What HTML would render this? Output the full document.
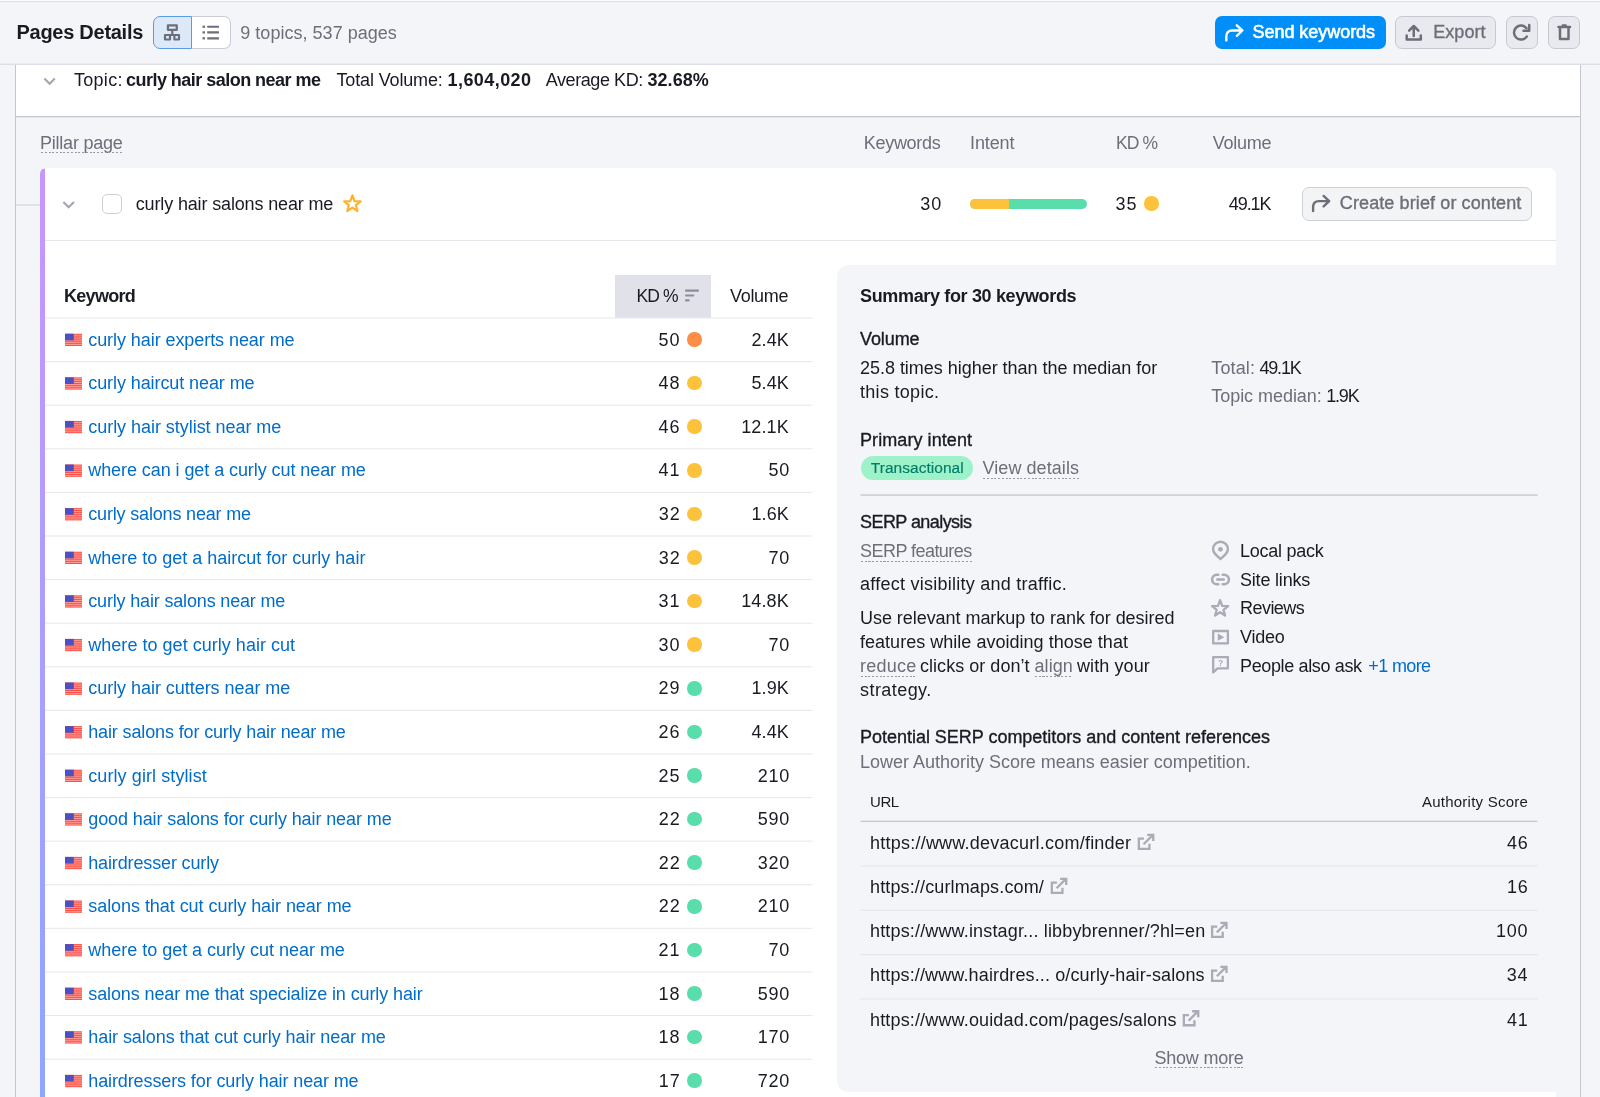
<!DOCTYPE html>
<html lang="en"><head><meta charset="utf-8"><title>Pages Details</title>
<style>
html,body{margin:0;padding:0}
body{width:1600px;height:1097px;overflow:hidden;position:relative;background:#f4f5f9;font-family:"Liberation Sans",sans-serif}
div,span.t,svg{position:absolute}
span.t{line-height:1;white-space:nowrap}
</style></head><body><div id="w" style="left:0;top:0;width:1600px;height:1097px;will-change:transform">
<div style="left:0px;top:0px;width:1600px;height:1px;background:#fbfbfb;"></div>
<div style="left:0px;top:1px;width:1600px;height:1px;background:#e2e2e3;"></div>
<div style="left:0px;top:2px;width:1600px;height:1px;background:#eeeff2;"></div>
<div style="left:0px;top:63px;width:1600px;height:1px;background:#eaebf0;"></div>
<div style="left:0px;top:64px;width:1600px;height:1px;background:#dddfe7;"></div>
<div style="left:15px;top:65px;width:1px;height:1032px;background:#c4c7cf;"></div>
<div style="left:1580px;top:65px;width:1px;height:1032px;background:#c4c7cf;"></div>
<div style="left:16px;top:65px;width:1564px;height:51px;background:#fff;"></div>
<div style="left:16px;top:116px;width:1564px;height:1px;background:#c4c7cf;"></div>
<div style="left:16px;top:117px;width:1564px;height:1px;background:#e9eaee;"></div>
<div style="left:16px;top:204px;width:24px;height:2px;background:#e1e2e7;"></div>
<div style="left:40px;top:168px;width:1516px;height:929px;background:#fff;border-radius:7px 7px 0 0"></div>
<div style="left:45px;top:240px;width:1511px;height:1px;background:#e6e7ec;"></div>
<div style="left:615px;top:274.5px;width:96px;height:43.5px;background:#e0e1e9;"></div>
<div style="left:837px;top:265px;width:719px;height:826.5px;background:#f4f5f9;border-radius:12px 0 0 12px"></div>
<div style="left:153px;top:15.5px;width:39px;height:33.5px;background:#dce9f9;border:1px solid #5a9be4;border-radius:7px 0 0 7px;box-sizing:border-box"></div>
<div style="left:192px;top:15.5px;width:38.6px;height:33.5px;background:#fff;border:1px solid #c9ccd4;border-left:none;border-radius:0 7px 7px 0;box-sizing:border-box"></div>
<div style="left:1215px;top:16px;width:171px;height:33px;background:#008ff8;border-radius:7px"></div>
<div style="left:1395px;top:16px;width:101px;height:33px;background:#e9eaef;border:1px solid #c6c9d1;border-radius:7px;box-sizing:border-box"></div>
<div style="left:1505.5px;top:16px;width:32.2px;height:33px;background:#e9eaef;border:1px solid #c6c9d1;border-radius:7px;box-sizing:border-box"></div>
<div style="left:1548px;top:16px;width:32px;height:33px;background:#e9eaef;border:1px solid #c6c9d1;border-radius:7px;box-sizing:border-box"></div>
<div style="left:1302px;top:186.5px;width:230px;height:34.5px;background:#f3f4f6;border:1px solid #cfd1d8;border-radius:7px;box-sizing:border-box"></div>
<div style="left:102.2px;top:194px;width:19.6px;height:19.5px;background:#fff;border:1px solid #cdd0d7;border-radius:5px;box-sizing:border-box"></div>
<div style="left:970px;top:198.75px;width:117px;height:10px;border-radius:5px;overflow:hidden;background:#59ddaa"><div style="left:0;top:0;width:39px;height:10px;background:#fdc23c"></div></div>
<div style="left:860.5px;top:456.25px;width:112.75px;height:23.75px;background:#9ef2c9;border-radius:12px"></div>
<div style="left:1144.0px;top:196.35px;width:14.5px;height:14.5px;background:#fdc23c;border-radius:50%"></div>
<div style="left:687.0px;top:332.25px;width:14.5px;height:14.5px;background:#ff8c43;border-radius:50%"></div>
<div style="left:687.0px;top:375.85px;width:14.5px;height:14.5px;background:#fdc23c;border-radius:50%"></div>
<div style="left:687.0px;top:419.44px;width:14.5px;height:14.5px;background:#fdc23c;border-radius:50%"></div>
<div style="left:687.0px;top:463.04px;width:14.5px;height:14.5px;background:#fdc23c;border-radius:50%"></div>
<div style="left:687.0px;top:506.64px;width:14.5px;height:14.5px;background:#fdc23c;border-radius:50%"></div>
<div style="left:687.0px;top:550.24px;width:14.5px;height:14.5px;background:#fdc23c;border-radius:50%"></div>
<div style="left:687.0px;top:593.83px;width:14.5px;height:14.5px;background:#fdc23c;border-radius:50%"></div>
<div style="left:687.0px;top:637.43px;width:14.5px;height:14.5px;background:#fdc23c;border-radius:50%"></div>
<div style="left:687.0px;top:681.03px;width:14.5px;height:14.5px;background:#59ddaa;border-radius:50%"></div>
<div style="left:687.0px;top:724.62px;width:14.5px;height:14.5px;background:#59ddaa;border-radius:50%"></div>
<div style="left:687.0px;top:768.22px;width:14.5px;height:14.5px;background:#59ddaa;border-radius:50%"></div>
<div style="left:687.0px;top:811.82px;width:14.5px;height:14.5px;background:#59ddaa;border-radius:50%"></div>
<div style="left:687.0px;top:855.41px;width:14.5px;height:14.5px;background:#59ddaa;border-radius:50%"></div>
<div style="left:687.0px;top:899.01px;width:14.5px;height:14.5px;background:#59ddaa;border-radius:50%"></div>
<div style="left:687.0px;top:942.61px;width:14.5px;height:14.5px;background:#59ddaa;border-radius:50%"></div>
<div style="left:687.0px;top:986.21px;width:14.5px;height:14.5px;background:#59ddaa;border-radius:50%"></div>
<div style="left:687.0px;top:1029.8px;width:14.5px;height:14.5px;background:#59ddaa;border-radius:50%"></div>
<div style="left:687.0px;top:1073.4px;width:14.5px;height:14.5px;background:#59ddaa;border-radius:50%"></div>
<span class="t" style="left:16.5px;top:22px;font-size:20px;color:#191b23;font-weight:700;letter-spacing:-0.271px;">Pages Details</span>
<span class="t" style="left:240.25px;top:24px;font-size:18px;color:#6c6e79;letter-spacing:0.028px;">9 topics, 537 pages</span>
<span class="t" style="left:1252.5px;top:23px;font-size:18px;color:#ffffff;letter-spacing:-0.042px;-webkit-text-stroke:0.6px #ffffff;">Send keywords</span>
<span class="t" style="left:1433.25px;top:23px;font-size:18px;color:#6c6e79;letter-spacing:0.05px;-webkit-text-stroke:0.35px #6c6e79;">Export</span>
<span class="t" style="left:73.95px;top:71px;font-size:18px;color:#191b23;letter-spacing:0.3px;">Topic:</span>
<span class="t" style="left:126.0px;top:71px;font-size:18px;color:#191b23;font-weight:700;letter-spacing:-0.526px;">curly hair salon near me</span>
<span class="t" style="left:336.5px;top:71px;font-size:18px;color:#191b23;letter-spacing:-0.146px;">Total Volume:</span>
<span class="t" style="left:447.5px;top:71px;font-size:18px;color:#191b23;font-weight:700;letter-spacing:0.438px;">1,604,020</span>
<span class="t" style="left:545.75px;top:71px;font-size:18px;color:#191b23;letter-spacing:-0.425px;">Average KD:</span>
<span class="t" style="left:647.5px;top:71px;font-size:18px;color:#191b23;font-weight:700;letter-spacing:0.05px;">32.68%</span>
<span class="t" style="left:40.0px;top:134px;font-size:18px;color:#6c6e79;letter-spacing:-0.225px;">Pillar page</span>
<div style="left:40.5px;top:152px;width:82.0px;height:1px;background:repeating-linear-gradient(90deg,#9799a4 0,#9799a4 2px,transparent 2px,transparent 3.75px)"></div>
<span class="t" style="left:863.75px;top:134px;font-size:18px;color:#6c6e79;letter-spacing:-0.286px;">Keywords</span>
<span class="t" style="left:970.0px;top:134px;font-size:18px;color:#6c6e79;letter-spacing:-0.1px;">Intent</span>
<span class="t" style="left:1116.0px;top:135px;font-size:17.5px;color:#6c6e79;letter-spacing:-0.85px;">KD %</span>
<span class="t" style="left:1212.75px;top:134px;font-size:18px;color:#6c6e79;letter-spacing:-0.25px;">Volume</span>
<span class="t" style="left:135.75px;top:195px;font-size:18px;color:#191b23;letter-spacing:-0.146px;">curly hair salons near me</span>
<span class="t" style="left:920.25px;top:195px;font-size:18px;color:#191b23;letter-spacing:1.0px;">30</span>
<span class="t" style="left:1115.5px;top:195px;font-size:18px;color:#191b23;letter-spacing:1.0px;">35</span>
<span class="t" style="left:1228.75px;top:195px;font-size:18px;color:#191b23;letter-spacing:-1.062px;">49.1K</span>
<span class="t" style="left:1339.8px;top:194px;font-size:18px;color:#6c6e79;letter-spacing:0.111px;-webkit-text-stroke:0.35px #6c6e79;">Create brief or content</span>
<span class="t" style="left:64.0px;top:287px;font-size:18px;color:#191b23;font-weight:700;letter-spacing:-0.708px;">Keyword</span>
<span class="t" style="left:636.5px;top:288px;font-size:17.5px;color:#191b23;letter-spacing:-0.85px;">KD %</span>
<span class="t" style="left:730.0px;top:287px;font-size:18px;color:#191b23;letter-spacing:-0.3px;">Volume</span>
<span class="t" style="left:88.25px;top:331px;font-size:18px;color:#006dca;letter-spacing:-0.07px;">curly hair experts near me</span>
<span class="t" style="left:658.45px;top:331px;font-size:18px;color:#191b23;letter-spacing:1.0px;">50</span>
<span class="t" style="left:751.5px;top:331px;font-size:18px;color:#191b23;letter-spacing:0.1px;">2.4K</span>
<span class="t" style="left:88.25px;top:374px;font-size:18px;color:#006dca;letter-spacing:-0.088px;">curly haircut near me</span>
<span class="t" style="left:658.45px;top:374px;font-size:18px;color:#191b23;letter-spacing:1.0px;">48</span>
<span class="t" style="left:751.5px;top:374px;font-size:18px;color:#191b23;letter-spacing:0.1px;">5.4K</span>
<span class="t" style="left:88.25px;top:418px;font-size:18px;color:#006dca;letter-spacing:-0.04px;">curly hair stylist near me</span>
<span class="t" style="left:658.45px;top:418px;font-size:18px;color:#191b23;letter-spacing:1.0px;">46</span>
<span class="t" style="left:741.25px;top:418px;font-size:18px;color:#191b23;letter-spacing:0.1px;">12.1K</span>
<span class="t" style="left:88.25px;top:461px;font-size:18px;color:#006dca;letter-spacing:-0.074px;">where can i get a curly cut near me</span>
<span class="t" style="left:658.45px;top:461px;font-size:18px;color:#191b23;letter-spacing:1.0px;">41</span>
<span class="t" style="left:768.5px;top:461px;font-size:18px;color:#191b23;letter-spacing:0.7px;">50</span>
<span class="t" style="left:88.25px;top:505px;font-size:18px;color:#006dca;letter-spacing:-0.171px;">curly salons near me</span>
<span class="t" style="left:658.7px;top:505px;font-size:18px;color:#191b23;letter-spacing:1.0px;">32</span>
<span class="t" style="left:751.5px;top:505px;font-size:18px;color:#191b23;letter-spacing:0.1px;">1.6K</span>
<span class="t" style="left:88.25px;top:549px;font-size:18px;color:#006dca;">where to get a haircut for curly hair</span>
<span class="t" style="left:658.7px;top:549px;font-size:18px;color:#191b23;letter-spacing:1.0px;">32</span>
<span class="t" style="left:768.5px;top:549px;font-size:18px;color:#191b23;letter-spacing:0.7px;">70</span>
<span class="t" style="left:88.25px;top:592px;font-size:18px;color:#006dca;letter-spacing:-0.167px;">curly hair salons near me</span>
<span class="t" style="left:658.45px;top:592px;font-size:18px;color:#191b23;letter-spacing:1.0px;">31</span>
<span class="t" style="left:741.25px;top:592px;font-size:18px;color:#191b23;letter-spacing:0.1px;">14.8K</span>
<span class="t" style="left:88.25px;top:636px;font-size:18px;color:#006dca;letter-spacing:0.029px;">where to get curly hair cut</span>
<span class="t" style="left:658.45px;top:636px;font-size:18px;color:#191b23;letter-spacing:1.0px;">30</span>
<span class="t" style="left:768.5px;top:636px;font-size:18px;color:#191b23;letter-spacing:0.7px;">70</span>
<span class="t" style="left:88.25px;top:679px;font-size:18px;color:#006dca;letter-spacing:-0.04px;">curly hair cutters near me</span>
<span class="t" style="left:658.45px;top:679px;font-size:18px;color:#191b23;letter-spacing:1.0px;">29</span>
<span class="t" style="left:751.5px;top:679px;font-size:18px;color:#191b23;letter-spacing:0.1px;">1.9K</span>
<span class="t" style="left:88.25px;top:723px;font-size:18px;color:#006dca;letter-spacing:-0.136px;">hair salons for curly hair near me</span>
<span class="t" style="left:658.45px;top:723px;font-size:18px;color:#191b23;letter-spacing:1.0px;">26</span>
<span class="t" style="left:751.5px;top:723px;font-size:18px;color:#191b23;letter-spacing:0.1px;">4.4K</span>
<span class="t" style="left:88.25px;top:767px;font-size:18px;color:#006dca;letter-spacing:0.088px;">curly girl stylist</span>
<span class="t" style="left:658.45px;top:767px;font-size:18px;color:#191b23;letter-spacing:1.0px;">25</span>
<span class="t" style="left:757.75px;top:767px;font-size:18px;color:#191b23;letter-spacing:0.7px;">210</span>
<span class="t" style="left:88.25px;top:810px;font-size:18px;color:#006dca;letter-spacing:-0.099px;">good hair salons for curly hair near me</span>
<span class="t" style="left:658.7px;top:810px;font-size:18px;color:#191b23;letter-spacing:1.0px;">22</span>
<span class="t" style="left:757.75px;top:810px;font-size:18px;color:#191b23;letter-spacing:0.7px;">590</span>
<span class="t" style="left:88.25px;top:854px;font-size:18px;color:#006dca;letter-spacing:-0.141px;">hairdresser curly</span>
<span class="t" style="left:658.7px;top:854px;font-size:18px;color:#191b23;letter-spacing:1.0px;">22</span>
<span class="t" style="left:757.75px;top:854px;font-size:18px;color:#191b23;letter-spacing:0.7px;">320</span>
<span class="t" style="left:88.25px;top:897px;font-size:18px;color:#006dca;letter-spacing:-0.053px;">salons that cut curly hair near me</span>
<span class="t" style="left:658.7px;top:897px;font-size:18px;color:#191b23;letter-spacing:1.0px;">22</span>
<span class="t" style="left:757.75px;top:897px;font-size:18px;color:#191b23;letter-spacing:0.7px;">210</span>
<span class="t" style="left:88.25px;top:941px;font-size:18px;color:#006dca;letter-spacing:-0.016px;">where to get a curly cut near me</span>
<span class="t" style="left:658.45px;top:941px;font-size:18px;color:#191b23;letter-spacing:1.0px;">21</span>
<span class="t" style="left:768.5px;top:941px;font-size:18px;color:#191b23;letter-spacing:0.7px;">70</span>
<span class="t" style="left:88.25px;top:985px;font-size:18px;color:#006dca;letter-spacing:-0.11px;">salons near me that specialize in curly hair</span>
<span class="t" style="left:658.45px;top:985px;font-size:18px;color:#191b23;letter-spacing:1.0px;">18</span>
<span class="t" style="left:757.75px;top:985px;font-size:18px;color:#191b23;letter-spacing:0.7px;">590</span>
<span class="t" style="left:88.25px;top:1028px;font-size:18px;color:#006dca;letter-spacing:-0.066px;">hair salons that cut curly hair near me</span>
<span class="t" style="left:658.45px;top:1028px;font-size:18px;color:#191b23;letter-spacing:1.0px;">18</span>
<span class="t" style="left:757.75px;top:1028px;font-size:18px;color:#191b23;letter-spacing:0.7px;">170</span>
<span class="t" style="left:88.25px;top:1072px;font-size:18px;color:#006dca;letter-spacing:-0.11px;">hairdressers for curly hair near me</span>
<span class="t" style="left:658.7px;top:1072px;font-size:18px;color:#191b23;letter-spacing:1.0px;">17</span>
<span class="t" style="left:757.75px;top:1072px;font-size:18px;color:#191b23;letter-spacing:0.7px;">720</span>
<span class="t" style="left:860.0px;top:287px;font-size:18px;color:#191b23;font-weight:700;letter-spacing:-0.341px;">Summary for 30 keywords</span>
<span class="t" style="left:860.0px;top:330px;font-size:18px;color:#191b23;letter-spacing:-0.1px;-webkit-text-stroke:0.35px #191b23;">Volume</span>
<span class="t" style="left:860.0px;top:359px;font-size:18px;color:#191b23;letter-spacing:-0.028px;">25.8 times higher than the median for</span>
<span class="t" style="left:860.0px;top:383px;font-size:18px;color:#191b23;letter-spacing:0.3px;">this topic.</span>
<span class="t" style="left:1211.25px;top:359px;font-size:18px;color:#6c6e79;letter-spacing:0.15px;">Total:</span>
<span class="t" style="left:1259.5px;top:359px;font-size:18px;color:#191b23;letter-spacing:-1.2px;">49.1K</span>
<span class="t" style="left:1211.25px;top:387px;font-size:18px;color:#6c6e79;letter-spacing:-0.042px;">Topic median:</span>
<span class="t" style="left:1326.25px;top:387px;font-size:18px;color:#191b23;letter-spacing:-1.2px;">1.9K</span>
<span class="t" style="left:860.0px;top:431px;font-size:18px;color:#191b23;letter-spacing:0.077px;-webkit-text-stroke:0.35px #191b23;">Primary intent</span>
<span class="t" style="left:870.75px;top:460px;font-size:15.5px;color:#007c65;letter-spacing:0.042px;-webkit-text-stroke:0.15px #007c65;">Transactional</span>
<span class="t" style="left:982.5px;top:459px;font-size:18px;color:#6c6e79;letter-spacing:0.068px;">View details</span>
<div style="left:983px;top:478px;width:95.75px;height:1px;background:repeating-linear-gradient(90deg,#9799a4 0,#9799a4 2px,transparent 2px,transparent 3.75px)"></div>
<span class="t" style="left:860.0px;top:513px;font-size:18px;color:#191b23;letter-spacing:-0.562px;-webkit-text-stroke:0.35px #191b23;">SERP analysis</span>
<span class="t" style="left:860.0px;top:542px;font-size:18px;color:#6c6e79;letter-spacing:-0.542px;">SERP features</span>
<div style="left:860.5px;top:561px;width:111.5px;height:1px;background:repeating-linear-gradient(90deg,#9799a4 0,#9799a4 2px,transparent 2px,transparent 3.75px)"></div>
<span class="t" style="left:860.0px;top:575px;font-size:18px;color:#191b23;letter-spacing:0.25px;">affect visibility and traffic.</span>
<span class="t" style="left:860.0px;top:609px;font-size:18px;color:#191b23;letter-spacing:-0.046px;">Use relevant markup to rank for desired</span>
<span class="t" style="left:860.0px;top:633px;font-size:18px;color:#191b23;letter-spacing:0.023px;">features while avoiding those that</span>
<span class="t" style="left:860.0px;top:657px;font-size:18px;color:#6c6e79;letter-spacing:0.25px;">reduce</span>
<div style="left:860.5px;top:676px;width:55.5px;height:1px;background:repeating-linear-gradient(90deg,#9799a4 0,#9799a4 2px,transparent 2px,transparent 3.75px)"></div>
<span class="t" style="left:920.0px;top:657px;font-size:18px;color:#191b23;letter-spacing:0.036px;">clicks or don’t</span>
<span class="t" style="left:1034.5px;top:657px;font-size:18px;color:#6c6e79;letter-spacing:0.062px;">align</span>
<div style="left:1035px;top:676px;width:37px;height:1px;background:repeating-linear-gradient(90deg,#9799a4 0,#9799a4 2px,transparent 2px,transparent 3.75px)"></div>
<span class="t" style="left:1077.0px;top:657px;font-size:18px;color:#191b23;letter-spacing:0.094px;">with your</span>
<span class="t" style="left:860.0px;top:681px;font-size:18px;color:#191b23;letter-spacing:0.438px;">strategy.</span>
<span class="t" style="left:860.0px;top:728px;font-size:18px;color:#191b23;letter-spacing:-0.021px;-webkit-text-stroke:0.35px #191b23;">Potential SERP competitors and content references</span>
<span class="t" style="left:860.0px;top:753px;font-size:18px;color:#6c6e79;letter-spacing:-0.011px;">Lower Authority Score means easier competition.</span>
<span class="t" style="left:870.0px;top:794px;font-size:15px;color:#191b23;letter-spacing:-0.4px;">URL</span>
<span class="t" style="left:1422.0px;top:794px;font-size:15px;color:#191b23;letter-spacing:0.232px;">Authority Score</span>
<span class="t" style="left:870.0px;top:834px;font-size:18px;color:#191b23;letter-spacing:0.233px;">https://www.devacurl.com/finder</span>
<span class="t" style="left:1507.0px;top:834px;font-size:18px;color:#191b23;letter-spacing:0.8px;">46</span>
<span class="t" style="left:870.0px;top:878px;font-size:18px;color:#191b23;letter-spacing:0.138px;">https://curlmaps.com/</span>
<span class="t" style="left:1507.0px;top:878px;font-size:18px;color:#191b23;letter-spacing:0.8px;">16</span>
<span class="t" style="left:870.0px;top:922px;font-size:18px;color:#191b23;letter-spacing:0.159px;">https://www.instagr... libbybrenner/?hl=en</span>
<span class="t" style="left:1496.0px;top:922px;font-size:18px;color:#191b23;letter-spacing:0.8px;">100</span>
<span class="t" style="left:870.0px;top:966px;font-size:18px;color:#191b23;letter-spacing:0.131px;">https://www.hairdres... o/curly-hair-salons</span>
<span class="t" style="left:1506.75px;top:966px;font-size:18px;color:#191b23;letter-spacing:0.8px;">34</span>
<span class="t" style="left:870.0px;top:1011px;font-size:18px;color:#191b23;letter-spacing:0.154px;">https://www.ouidad.com/pages/salons</span>
<span class="t" style="left:1507.0px;top:1011px;font-size:18px;color:#191b23;letter-spacing:0.8px;">41</span>
<span class="t" style="left:1154.5px;top:1049px;font-size:18px;color:#6c6e79;letter-spacing:-0.219px;">Show more</span>
<div style="left:1155px;top:1067px;width:88.5px;height:1px;background:repeating-linear-gradient(90deg,#9799a4 0,#9799a4 2px,transparent 2px,transparent 3.75px)"></div>
<span class="t" style="left:1240.0px;top:542px;font-size:18px;color:#191b23;letter-spacing:-0.25px;">Local pack</span>
<span class="t" style="left:1240.0px;top:571px;font-size:18px;color:#191b23;letter-spacing:-0.194px;">Site links</span>
<span class="t" style="left:1240.0px;top:599px;font-size:18px;color:#191b23;letter-spacing:-0.542px;">Reviews</span>
<span class="t" style="left:1240.0px;top:628px;font-size:18px;color:#191b23;letter-spacing:-0.25px;">Video</span>
<span class="t" style="left:1240.0px;top:657px;font-size:18px;color:#191b23;letter-spacing:-0.357px;">People also ask</span>
<span class="t" style="left:1368.25px;top:657px;font-size:18px;color:#006dca;letter-spacing:-0.625px;">+1 more</span>
<svg width="1600" height="1097" viewBox="0 0 1600 1097" style="left:0;top:0">
<defs><linearGradient id="pg" x1="0" y1="168" x2="0" y2="1097" gradientUnits="userSpaceOnUse"><stop offset="0" stop-color="#c796ff"/><stop offset="1" stop-color="#8ea6ff"/></linearGradient></defs>
<path d="M40,1097 V174.5 Q40,168.5 45,168.5 V1097 Z" fill="url(#pg)"/>
<rect x="45" y="317.45" width="767.5" height="1.1" fill="#e8e9ee"/>
<rect x="45" y="361.05" width="767.5" height="1.1" fill="#e8e9ee"/>
<rect x="45" y="404.64" width="767.5" height="1.1" fill="#e8e9ee"/>
<rect x="45" y="448.24" width="767.5" height="1.1" fill="#e8e9ee"/>
<rect x="45" y="491.84" width="767.5" height="1.1" fill="#e8e9ee"/>
<rect x="45" y="535.44" width="767.5" height="1.1" fill="#e8e9ee"/>
<rect x="45" y="579.03" width="767.5" height="1.1" fill="#e8e9ee"/>
<rect x="45" y="622.63" width="767.5" height="1.1" fill="#e8e9ee"/>
<rect x="45" y="666.23" width="767.5" height="1.1" fill="#e8e9ee"/>
<rect x="45" y="709.82" width="767.5" height="1.1" fill="#e8e9ee"/>
<rect x="45" y="753.42" width="767.5" height="1.1" fill="#e8e9ee"/>
<rect x="45" y="797.02" width="767.5" height="1.1" fill="#e8e9ee"/>
<rect x="45" y="840.61" width="767.5" height="1.1" fill="#e8e9ee"/>
<rect x="45" y="884.21" width="767.5" height="1.1" fill="#e8e9ee"/>
<rect x="45" y="927.81" width="767.5" height="1.1" fill="#e8e9ee"/>
<rect x="45" y="971.41" width="767.5" height="1.1" fill="#e8e9ee"/>
<rect x="45" y="1015.00" width="767.5" height="1.1" fill="#e8e9ee"/>
<rect x="45" y="1058.60" width="767.5" height="1.1" fill="#e8e9ee"/>
<rect x="860.5" y="494.35" width="677" height="1.4" fill="#c4c7cf"/>
<rect x="860.5" y="820.7" width="677" height="1.3" fill="#c4c7cf"/>
<rect x="860.5" y="865.45" width="677" height="1.1" fill="#e4e5eb"/>
<rect x="860.5" y="909.75" width="677" height="1.1" fill="#e4e5eb"/>
<rect x="860.5" y="954.05" width="677" height="1.1" fill="#e4e5eb"/>
<rect x="860.5" y="998.45" width="677" height="1.1" fill="#e4e5eb"/>
<g transform="translate(65,333.75)"><rect width="17" height="12.25" fill="#fe4a40"/><rect y="0.942" width="17" height="0.942" fill="#ffa29c"/><rect y="2.827" width="17" height="0.942" fill="#ffa29c"/><rect y="4.712" width="17" height="0.942" fill="#ffa29c"/><rect y="6.596" width="17" height="0.942" fill="#ffa29c"/><rect y="8.481" width="17" height="0.942" fill="#ffa29c"/><rect y="10.365" width="17" height="0.942" fill="#ffa29c"/><rect width="8.8" height="6.6" fill="#4c50c0"/></g>
<g transform="translate(65,377.35)"><rect width="17" height="12.25" fill="#fe4a40"/><rect y="0.942" width="17" height="0.942" fill="#ffa29c"/><rect y="2.827" width="17" height="0.942" fill="#ffa29c"/><rect y="4.712" width="17" height="0.942" fill="#ffa29c"/><rect y="6.596" width="17" height="0.942" fill="#ffa29c"/><rect y="8.481" width="17" height="0.942" fill="#ffa29c"/><rect y="10.365" width="17" height="0.942" fill="#ffa29c"/><rect width="8.8" height="6.6" fill="#4c50c0"/></g>
<g transform="translate(65,420.94)"><rect width="17" height="12.25" fill="#fe4a40"/><rect y="0.942" width="17" height="0.942" fill="#ffa29c"/><rect y="2.827" width="17" height="0.942" fill="#ffa29c"/><rect y="4.712" width="17" height="0.942" fill="#ffa29c"/><rect y="6.596" width="17" height="0.942" fill="#ffa29c"/><rect y="8.481" width="17" height="0.942" fill="#ffa29c"/><rect y="10.365" width="17" height="0.942" fill="#ffa29c"/><rect width="8.8" height="6.6" fill="#4c50c0"/></g>
<g transform="translate(65,464.54)"><rect width="17" height="12.25" fill="#fe4a40"/><rect y="0.942" width="17" height="0.942" fill="#ffa29c"/><rect y="2.827" width="17" height="0.942" fill="#ffa29c"/><rect y="4.712" width="17" height="0.942" fill="#ffa29c"/><rect y="6.596" width="17" height="0.942" fill="#ffa29c"/><rect y="8.481" width="17" height="0.942" fill="#ffa29c"/><rect y="10.365" width="17" height="0.942" fill="#ffa29c"/><rect width="8.8" height="6.6" fill="#4c50c0"/></g>
<g transform="translate(65,508.14)"><rect width="17" height="12.25" fill="#fe4a40"/><rect y="0.942" width="17" height="0.942" fill="#ffa29c"/><rect y="2.827" width="17" height="0.942" fill="#ffa29c"/><rect y="4.712" width="17" height="0.942" fill="#ffa29c"/><rect y="6.596" width="17" height="0.942" fill="#ffa29c"/><rect y="8.481" width="17" height="0.942" fill="#ffa29c"/><rect y="10.365" width="17" height="0.942" fill="#ffa29c"/><rect width="8.8" height="6.6" fill="#4c50c0"/></g>
<g transform="translate(65,551.74)"><rect width="17" height="12.25" fill="#fe4a40"/><rect y="0.942" width="17" height="0.942" fill="#ffa29c"/><rect y="2.827" width="17" height="0.942" fill="#ffa29c"/><rect y="4.712" width="17" height="0.942" fill="#ffa29c"/><rect y="6.596" width="17" height="0.942" fill="#ffa29c"/><rect y="8.481" width="17" height="0.942" fill="#ffa29c"/><rect y="10.365" width="17" height="0.942" fill="#ffa29c"/><rect width="8.8" height="6.6" fill="#4c50c0"/></g>
<g transform="translate(65,595.33)"><rect width="17" height="12.25" fill="#fe4a40"/><rect y="0.942" width="17" height="0.942" fill="#ffa29c"/><rect y="2.827" width="17" height="0.942" fill="#ffa29c"/><rect y="4.712" width="17" height="0.942" fill="#ffa29c"/><rect y="6.596" width="17" height="0.942" fill="#ffa29c"/><rect y="8.481" width="17" height="0.942" fill="#ffa29c"/><rect y="10.365" width="17" height="0.942" fill="#ffa29c"/><rect width="8.8" height="6.6" fill="#4c50c0"/></g>
<g transform="translate(65,638.93)"><rect width="17" height="12.25" fill="#fe4a40"/><rect y="0.942" width="17" height="0.942" fill="#ffa29c"/><rect y="2.827" width="17" height="0.942" fill="#ffa29c"/><rect y="4.712" width="17" height="0.942" fill="#ffa29c"/><rect y="6.596" width="17" height="0.942" fill="#ffa29c"/><rect y="8.481" width="17" height="0.942" fill="#ffa29c"/><rect y="10.365" width="17" height="0.942" fill="#ffa29c"/><rect width="8.8" height="6.6" fill="#4c50c0"/></g>
<g transform="translate(65,682.53)"><rect width="17" height="12.25" fill="#fe4a40"/><rect y="0.942" width="17" height="0.942" fill="#ffa29c"/><rect y="2.827" width="17" height="0.942" fill="#ffa29c"/><rect y="4.712" width="17" height="0.942" fill="#ffa29c"/><rect y="6.596" width="17" height="0.942" fill="#ffa29c"/><rect y="8.481" width="17" height="0.942" fill="#ffa29c"/><rect y="10.365" width="17" height="0.942" fill="#ffa29c"/><rect width="8.8" height="6.6" fill="#4c50c0"/></g>
<g transform="translate(65,726.12)"><rect width="17" height="12.25" fill="#fe4a40"/><rect y="0.942" width="17" height="0.942" fill="#ffa29c"/><rect y="2.827" width="17" height="0.942" fill="#ffa29c"/><rect y="4.712" width="17" height="0.942" fill="#ffa29c"/><rect y="6.596" width="17" height="0.942" fill="#ffa29c"/><rect y="8.481" width="17" height="0.942" fill="#ffa29c"/><rect y="10.365" width="17" height="0.942" fill="#ffa29c"/><rect width="8.8" height="6.6" fill="#4c50c0"/></g>
<g transform="translate(65,769.72)"><rect width="17" height="12.25" fill="#fe4a40"/><rect y="0.942" width="17" height="0.942" fill="#ffa29c"/><rect y="2.827" width="17" height="0.942" fill="#ffa29c"/><rect y="4.712" width="17" height="0.942" fill="#ffa29c"/><rect y="6.596" width="17" height="0.942" fill="#ffa29c"/><rect y="8.481" width="17" height="0.942" fill="#ffa29c"/><rect y="10.365" width="17" height="0.942" fill="#ffa29c"/><rect width="8.8" height="6.6" fill="#4c50c0"/></g>
<g transform="translate(65,813.32)"><rect width="17" height="12.25" fill="#fe4a40"/><rect y="0.942" width="17" height="0.942" fill="#ffa29c"/><rect y="2.827" width="17" height="0.942" fill="#ffa29c"/><rect y="4.712" width="17" height="0.942" fill="#ffa29c"/><rect y="6.596" width="17" height="0.942" fill="#ffa29c"/><rect y="8.481" width="17" height="0.942" fill="#ffa29c"/><rect y="10.365" width="17" height="0.942" fill="#ffa29c"/><rect width="8.8" height="6.6" fill="#4c50c0"/></g>
<g transform="translate(65,856.91)"><rect width="17" height="12.25" fill="#fe4a40"/><rect y="0.942" width="17" height="0.942" fill="#ffa29c"/><rect y="2.827" width="17" height="0.942" fill="#ffa29c"/><rect y="4.712" width="17" height="0.942" fill="#ffa29c"/><rect y="6.596" width="17" height="0.942" fill="#ffa29c"/><rect y="8.481" width="17" height="0.942" fill="#ffa29c"/><rect y="10.365" width="17" height="0.942" fill="#ffa29c"/><rect width="8.8" height="6.6" fill="#4c50c0"/></g>
<g transform="translate(65,900.51)"><rect width="17" height="12.25" fill="#fe4a40"/><rect y="0.942" width="17" height="0.942" fill="#ffa29c"/><rect y="2.827" width="17" height="0.942" fill="#ffa29c"/><rect y="4.712" width="17" height="0.942" fill="#ffa29c"/><rect y="6.596" width="17" height="0.942" fill="#ffa29c"/><rect y="8.481" width="17" height="0.942" fill="#ffa29c"/><rect y="10.365" width="17" height="0.942" fill="#ffa29c"/><rect width="8.8" height="6.6" fill="#4c50c0"/></g>
<g transform="translate(65,944.11)"><rect width="17" height="12.25" fill="#fe4a40"/><rect y="0.942" width="17" height="0.942" fill="#ffa29c"/><rect y="2.827" width="17" height="0.942" fill="#ffa29c"/><rect y="4.712" width="17" height="0.942" fill="#ffa29c"/><rect y="6.596" width="17" height="0.942" fill="#ffa29c"/><rect y="8.481" width="17" height="0.942" fill="#ffa29c"/><rect y="10.365" width="17" height="0.942" fill="#ffa29c"/><rect width="8.8" height="6.6" fill="#4c50c0"/></g>
<g transform="translate(65,987.71)"><rect width="17" height="12.25" fill="#fe4a40"/><rect y="0.942" width="17" height="0.942" fill="#ffa29c"/><rect y="2.827" width="17" height="0.942" fill="#ffa29c"/><rect y="4.712" width="17" height="0.942" fill="#ffa29c"/><rect y="6.596" width="17" height="0.942" fill="#ffa29c"/><rect y="8.481" width="17" height="0.942" fill="#ffa29c"/><rect y="10.365" width="17" height="0.942" fill="#ffa29c"/><rect width="8.8" height="6.6" fill="#4c50c0"/></g>
<g transform="translate(65,1031.30)"><rect width="17" height="12.25" fill="#fe4a40"/><rect y="0.942" width="17" height="0.942" fill="#ffa29c"/><rect y="2.827" width="17" height="0.942" fill="#ffa29c"/><rect y="4.712" width="17" height="0.942" fill="#ffa29c"/><rect y="6.596" width="17" height="0.942" fill="#ffa29c"/><rect y="8.481" width="17" height="0.942" fill="#ffa29c"/><rect y="10.365" width="17" height="0.942" fill="#ffa29c"/><rect width="8.8" height="6.6" fill="#4c50c0"/></g>
<g transform="translate(65,1074.90)"><rect width="17" height="12.25" fill="#fe4a40"/><rect y="0.942" width="17" height="0.942" fill="#ffa29c"/><rect y="2.827" width="17" height="0.942" fill="#ffa29c"/><rect y="4.712" width="17" height="0.942" fill="#ffa29c"/><rect y="6.596" width="17" height="0.942" fill="#ffa29c"/><rect y="8.481" width="17" height="0.942" fill="#ffa29c"/><rect y="10.365" width="17" height="0.942" fill="#ffa29c"/><rect width="8.8" height="6.6" fill="#4c50c0"/></g>
<path transform="translate(1224.8,24.4)" d="M1.5,16 V12 Q1.5,6.1 7.4,6.1 H17.3 M12,0.9 L17.6,6.1 L12,11.4" fill="none" stroke="#fff" stroke-width="2.4" stroke-linecap="round" stroke-linejoin="round"/>
<path transform="translate(1311.6,195)" d="M1.5,16 V12 Q1.5,6.1 7.4,6.1 H17.3 M12,0.9 L17.6,6.1 L12,11.4" fill="none" stroke="#6c6e79" stroke-width="2.4" stroke-linecap="round" stroke-linejoin="round"/>
<g fill="none" stroke="#6c6e79" stroke-width="2.2" stroke-linejoin="round"><rect x="167.9" y="25.4" width="8.9" height="4.4"/><rect x="165" y="35" width="5" height="4.5"/><rect x="174.4" y="35" width="4.6" height="4.5"/><path d="M172.3,30.5V35M170,35H174.4"/></g>
<rect x="202.5" y="25.65" width="2.5" height="2.2" fill="#6c6e79"/><rect x="207.2" y="25.65" width="11.8" height="2.2" rx="0.5" fill="#6c6e79"/>
<rect x="202.5" y="31.299999999999997" width="2.5" height="2.2" fill="#6c6e79"/><rect x="207.2" y="31.299999999999997" width="11.8" height="2.2" rx="0.5" fill="#6c6e79"/>
<rect x="202.5" y="37.199999999999996" width="2.5" height="2.2" fill="#6c6e79"/><rect x="207.2" y="37.199999999999996" width="11.8" height="2.2" rx="0.5" fill="#6c6e79"/>
<path d="M1413.75,36 V26.3 M1409.1,30.6 L1413.75,26 L1418.4,30.6 M1406.7,35.4 V39.4 H1420.8 V35.4" fill="none" stroke="#6c6e79" stroke-width="2.5" stroke-linecap="round" stroke-linejoin="round"/>
<path d="M1526.52,28.29 A7.0,7.0 0 1 0 1526.73,36.62" fill="none" stroke="#6c6e79" stroke-width="2.5" stroke-linecap="round"/>
<path d="M1529.2,25 V30.7 H1523.5" fill="none" stroke="#6c6e79" stroke-width="2.5" stroke-linejoin="round" stroke-linecap="round"/>
<g fill="none" stroke="#6c6e79" stroke-width="2.5" stroke-linejoin="round" stroke-linecap="round"><path d="M1558.5,27 H1570"/><path d="M1562.6,25.3 H1565.9" stroke-width="2"/><path d="M1560,27.5 V39 H1568.5 V27.5"/></g>
<path d="M44.4,78.4 L49.6,83.8 L54.8,78.4" fill="none" stroke="#a3a5b0" stroke-width="2.1"/>
<path d="M63.4,202 L68.65,207.2 L73.9,202" fill="none" stroke="#a3a5b0" stroke-width="2.1"/>
<polygon points="352.40,195.30 354.55,201.04 360.67,201.31 355.88,205.13 357.51,211.04 352.40,207.65 347.29,211.04 348.92,205.13 344.13,201.31 350.25,201.04" fill="none" stroke="#ffb32b" stroke-width="2.2" stroke-linejoin="round"/>
<rect x="685" y="289.6" width="14" height="2.1" rx="1" fill="#8a8e9b"/>
<rect x="685" y="294.4" width="9.3" height="2.1" rx="1" fill="#8a8e9b"/>
<rect x="685" y="299.3" width="4.6" height="2.1" rx="1" fill="#8a8e9b"/>
<path d="M1220.5,559 C1216,555 1213.1,552.6 1213.1,549.2 A7.4,7.4 0 1 1 1227.9,549.2 C1227.9,552.6 1225,555 1220.5,559 Z" fill="none" stroke="#a9abb6" stroke-width="2.4" stroke-linejoin="round"/><circle cx="1220.5" cy="549.3" r="2.4" fill="#a9abb6"/>
<path d="M1218.3,574.7 H1216.9 A4.8,4.8 0 0 0 1216.9,584.3 H1218.3 M1222.7,574.7 H1224.1 A4.8,4.8 0 0 1 1224.1,584.3 H1222.7 M1217.3,579.5 H1223.7" fill="none" stroke="#a9abb6" stroke-width="2.5" stroke-linecap="round"/>
<polygon points="1220.10,600.20 1222.20,605.81 1228.18,606.07 1223.50,609.80 1225.10,615.58 1220.10,612.27 1215.10,615.58 1216.70,609.80 1212.02,606.07 1218.00,605.81" fill="none" stroke="#a9abb6" stroke-width="2.3" stroke-linejoin="round"/>
<rect x="1213.2" y="631" width="14.7" height="12.4" fill="none" stroke="#a9abb6" stroke-width="2.3" stroke-linejoin="round"/><path d="M1217.8,633.6 V640.8 L1224.3,637.2 Z" fill="#a9abb6"/>
<path d="M1213.2,672.4 V657.1 H1227.9 V668.3 H1217.6 Z" fill="none" stroke="#a9abb6" stroke-width="2.3" stroke-linejoin="round"/>
<text x="1220.6" y="666.2" font-size="8.5" font-weight="700" text-anchor="middle" fill="#a9abb6" font-family="Liberation Sans, sans-serif">?</text>
<path transform="translate(1137.75,833.70)" d="M6.2,4.9 H1.1 V15.1 H11.7 V10 M5.8,10.6 L15,1.4 M9.4,1.1 H15.5 V7.2" fill="none" stroke="#a9abb6" stroke-width="2.3"/>
<path transform="translate(1050.75,877.70)" d="M6.2,4.9 H1.1 V15.1 H11.7 V10 M5.8,10.6 L15,1.4 M9.4,1.1 H15.5 V7.2" fill="none" stroke="#a9abb6" stroke-width="2.3"/>
<path transform="translate(1211.0,921.80)" d="M6.2,4.9 H1.1 V15.1 H11.7 V10 M5.8,10.6 L15,1.4 M9.4,1.1 H15.5 V7.2" fill="none" stroke="#a9abb6" stroke-width="2.3"/>
<path transform="translate(1211.0,965.70)" d="M6.2,4.9 H1.1 V15.1 H11.7 V10 M5.8,10.6 L15,1.4 M9.4,1.1 H15.5 V7.2" fill="none" stroke="#a9abb6" stroke-width="2.3"/>
<path transform="translate(1182.75,1010.15)" d="M6.2,4.9 H1.1 V15.1 H11.7 V10 M5.8,10.6 L15,1.4 M9.4,1.1 H15.5 V7.2" fill="none" stroke="#a9abb6" stroke-width="2.3"/>
</svg>
</div></body></html>
